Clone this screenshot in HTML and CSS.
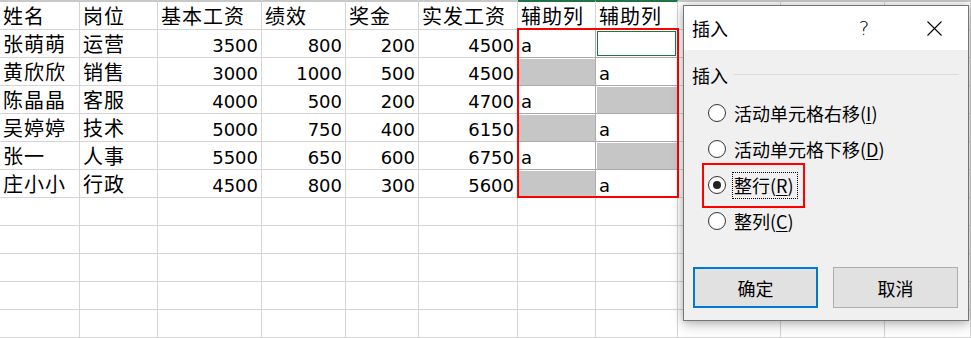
FILE: index.html
```html
<!DOCTYPE html>
<html lang="zh-CN">
<head>
<meta charset="utf-8">
<title>插入</title>
<link rel="stylesheet" href="styles.css">
</head>
<body>
<div class="sheet">
  <div class="c h">姓名</div><div class="c h">岗位</div><div class="c h">基本工资</div><div class="c h">绩效</div><div class="c h">奖金</div><div class="c h">实发工资</div><div class="c h sel">辅助列</div><div class="c h sel">辅助列</div><div class="c h"></div><div class="c h"></div><div class="c h"></div>

  <div class="c">张萌萌</div><div class="c">运营</div><div class="c n">3500</div><div class="c n">800</div><div class="c n">200</div><div class="c n">4500</div><div class="c n a x">a</div><div class="c x act"></div><div class="c"></div><div class="c"></div><div class="c"></div>

  <div class="c">黄欣欣</div><div class="c">销售</div><div class="c n">3000</div><div class="c n">1000</div><div class="c n">500</div><div class="c n">4500</div><div class="c x g"></div><div class="c n a x">a</div><div class="c"></div><div class="c"></div><div class="c"></div>

  <div class="c">陈晶晶</div><div class="c">客服</div><div class="c n">4000</div><div class="c n">500</div><div class="c n">200</div><div class="c n">4700</div><div class="c n a x">a</div><div class="c x g"></div><div class="c"></div><div class="c"></div><div class="c"></div>

  <div class="c">吴婷婷</div><div class="c">技术</div><div class="c n">5000</div><div class="c n">750</div><div class="c n">400</div><div class="c n">6150</div><div class="c x g"></div><div class="c n a x">a</div><div class="c"></div><div class="c"></div><div class="c"></div>

  <div class="c">张一</div><div class="c">人事</div><div class="c n">5500</div><div class="c n">650</div><div class="c n">600</div><div class="c n">6750</div><div class="c n a x">a</div><div class="c x g"></div><div class="c"></div><div class="c"></div><div class="c"></div>

  <div class="c">庄小小</div><div class="c">行政</div><div class="c n">4500</div><div class="c n">800</div><div class="c n">300</div><div class="c n">5600</div><div class="c x g"></div><div class="c n a x">a</div><div class="c"></div><div class="c"></div><div class="c"></div>

  <div class="c"></div><div class="c"></div><div class="c"></div><div class="c"></div><div class="c"></div><div class="c"></div><div class="c"></div><div class="c"></div><div class="c"></div><div class="c"></div><div class="c"></div>
  <div class="c"></div><div class="c"></div><div class="c"></div><div class="c"></div><div class="c"></div><div class="c"></div><div class="c"></div><div class="c"></div><div class="c"></div><div class="c"></div><div class="c"></div>
  <div class="c"></div><div class="c"></div><div class="c"></div><div class="c"></div><div class="c"></div><div class="c"></div><div class="c"></div><div class="c"></div><div class="c"></div><div class="c"></div><div class="c"></div>
  <div class="c"></div><div class="c"></div><div class="c"></div><div class="c"></div><div class="c"></div><div class="c"></div><div class="c"></div><div class="c"></div><div class="c"></div><div class="c"></div><div class="c"></div>
  <div class="c"></div><div class="c"></div><div class="c"></div><div class="c"></div><div class="c"></div><div class="c"></div><div class="c"></div><div class="c"></div><div class="c"></div><div class="c"></div><div class="c"></div>
</div>

<div class="mark"></div>

<div class="dlg">
  <div class="tbar">
    <span class="ttl">插入</span>
    <span class="help">?</span>
    <svg class="close" width="15" height="15" viewBox="0 0 15 15"><path d="M0.5 0.5 L14.5 14.5 M14.5 0.5 L0.5 14.5" stroke="#000" stroke-width="1.1" fill="none"/></svg>
  </div>
  <div class="body">
    <div class="grp"><span>插入</span><span class="rule"></span></div>
    <div class="opts">
      <div class="opt"><span class="rb"></span><span class="lbl">活动单元格右移(<u>I</u>)</span></div>
      <div class="opt"><span class="rb"></span><span class="lbl">活动单元格下移(<u>D</u>)</span></div>
      <div class="opt on"><span class="rb"></span><span class="lbl focus">整行(<u>R</u>)</span></div>
      <div class="opt"><span class="rb"></span><span class="lbl">整列(<u>C</u>)</span></div>
    </div>
    <div class="btns"><div class="btn def">确定</div><div class="btn">取消</div></div>
  </div>
  <div class="mark2"></div>
</div>
</body>
</html>
```

FILE: styles.css
```css
* { box-sizing: border-box; }
body {
  margin: 0;
  width: 971px;
  height: 338px;
  overflow: hidden;
  position: relative;
  background: #fff;
  color: #000;
}
.sheet {
  display: grid;
  grid-template-columns: 80px 78px 104px 84px 73px 99px 78px 82px 103px 104px 1fr;
  grid-template-rows: 30px;
  grid-auto-rows: 28px;
}
.c {
  border-right: 1px solid #d4d4d4;
  border-bottom: 1px solid #d4d4d4;
  padding: 0 3px;
  font-family: "Noto Sans CJK SC", sans-serif;
  font-size: 20px;
  letter-spacing: 1px;
  line-height: 27px;
  white-space: nowrap;
}
.h { border-top: 2px solid #c8c8c8; }
.h.sel { border-top-color: #217346; }
.n {
  font-family: "DejaVu Sans", sans-serif;
  font-size: 18px;
  letter-spacing: 0;
  line-height: 31px;
  text-align: right;
}
.n.a { text-align: left; }
.x { border-color: #ababab; }
.g {
  background: #c6c6c6;
  box-shadow: inset 1px 1px 0 #fff;
}
.act { position: relative; }
.act::after {
  content: "";
  position: absolute;
  left: 1px; top: 1px; right: 1px; bottom: 1px;
  border: 1px solid #217346;
}
.mark {
  position: absolute;
  left: 517px;
  top: 28px;
  width: 162px;
  height: 170px;
  border: 2px solid #ff0000;
}

.dlg {
  position: absolute;
  left: 683px;
  top: 5px;
  width: 286px;
  height: 316px;
  border: 1px solid #767676;
  background: #f0f0f0;
  box-shadow: 0 0 8px rgba(0,0,0,0.22), 0 5px 12px rgba(0,0,0,0.18);
  display: flex;
  flex-direction: column;
  font-family: "Noto Sans CJK SC", sans-serif;
  font-size: 18px;
}
.tbar {
  height: 44px;
  background: #fff;
  display: flex;
  align-items: center;
  padding-left: 8px;
}
.ttl { flex: 1; }
.help {
  width: 20px;
  text-align: center;
  margin-right: 53px;
  font-family: "DejaVu Sans", sans-serif;
  font-size: 20px;
  font-weight: 300;
}
.close { margin-right: 26px; display: block; }
.body {
  flex: 1;
  display: flex;
  flex-direction: column;
  padding: 13px 9px 12px 8px;
}
.grp {
  height: 24px;
  line-height: 24px;
  display: flex;
  align-items: center;
}
.rule {
  flex: 1;
  height: 1px;
  background: #dcdcdc;
  margin-left: 5px;
  margin-top: -2px;
}
.opts { margin-top: 8px; padding-left: 16px; }
.opt {
  height: 36px;
  display: flex;
  align-items: center;
}
.rb {
  width: 18px;
  height: 18px;
  border-radius: 50%;
  border: 1px solid #333;
  background: #fff;
  margin-right: 6px;
  display: flex;
  align-items: center;
  justify-content: center;
  flex: none;
}
.on .rb::after {
  content: "";
  width: 8px;
  height: 8px;
  border-radius: 50%;
  background: #222;
}
.lbl {
  border: 1px dotted transparent;
  padding: 0 1px;
  line-height: 25px;
}
.lbl.focus { border-color: #000; padding: 0 3px 0 1px; }
.lbl u { text-underline-offset: 2px; }
.btns {
  margin-top: auto;
  display: flex;
  gap: 15px;
  padding-left: 1px;
}
.btn {
  width: 125px;
  height: 41px;
  background: #e1e1e1;
  border: 1px solid #adadad;
  display: flex;
  align-items: center;
  justify-content: center;
}
.btn.def { border: 2px solid #0078d7; }
.mark2 {
  position: absolute;
  left: 18px;
  top: 157px;
  width: 103px;
  height: 45px;
  border: 2px solid #ff0000;
}
```
